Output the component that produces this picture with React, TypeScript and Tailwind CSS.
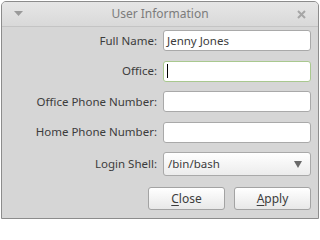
import React from "react";

const fields = [
  { label: "Full Name:", value: "Jenny Jones" },
  { label: "Office:", value: "", focused: true },
  { label: "Office Phone Number:", value: "" },
  { label: "Home Phone Number:", value: "" },
];

export default function App() {
  return (
    <div className="h-[220px] w-[320px] bg-white p-px" style={{ fontFamily: '"Noto Sans", sans-serif' }}>
      <div className="flex h-full flex-col overflow-hidden rounded-t-[5px] border border-[#8c8c8c] bg-[#d6d6d6]">
        {/* title bar */}
        <div className="flex h-[25px] shrink-0 items-center justify-between border-b border-[#c4c4c4] bg-gradient-to-b from-[#e6e6e6] to-[#d9d9d9] px-3">
          <svg width="9" height="6" viewBox="0 0 9 6">
            <path d="M0 0h9L4.5 5z" fill="#9a9a9a" />
          </svg>
          <span className="text-[12px] text-[#7c7c7c]">User Information</span>
          <svg width="9" height="9" viewBox="0 0 9 9">
            <path d="M1 1l7 7M8 1L1 8" stroke="#a6a6a6" strokeWidth="2" />
          </svg>
        </div>

        {/* form */}
        <div className="grid grid-cols-[155px_148px] items-center gap-x-[6px] gap-y-[9.5px] pt-[3px] text-[11.5px] text-[#3c3c3c]">
          {fields.map((f) => (
            <React.Fragment key={f.label}>
              <span className="whitespace-nowrap text-right">{f.label}</span>
              <div
                className={`flex h-[21px] items-center rounded-[3px] border bg-white px-[3px] ${
                  f.focused ? "border-[#a9c88f]" : "border-[#a9a9a9]"
                }`}
              >
                {f.focused ? <span className="h-[14px] w-px bg-black" /> : f.value}
              </div>
            </React.Fragment>
          ))}
          <span className="whitespace-nowrap text-right">Login Shell:</span>
          <div className="flex h-[24px] items-center justify-between rounded-[3px] border border-[#a9a9a9] bg-gradient-to-b from-white to-[#ececec] pl-[4px] pr-[8px]">
            <span>/bin/bash</span>
            <svg width="8" height="7" viewBox="0 0 8 7">
              <path d="M0 0h8L4 7z" fill="#6a6a6a" />
            </svg>
          </div>
        </div>

        {/* buttons */}
        <div className="mt-[11px] flex justify-end gap-[9px] pr-[7px] text-[12px] text-[#3c3c3c]">
          <button className="h-[23px] w-[77px] rounded-[3px] border border-[#a3a3a3] bg-gradient-to-b from-white to-[#e8e8e8]">
            <span className="underline underline-offset-2">C</span>lose
          </button>
          <button className="h-[23px] w-[77px] rounded-[3px] border border-[#a3a3a3] bg-gradient-to-b from-white to-[#e8e8e8]">
            <span className="underline underline-offset-2">A</span>pply
          </button>
        </div>
      </div>
    </div>
  );
}
